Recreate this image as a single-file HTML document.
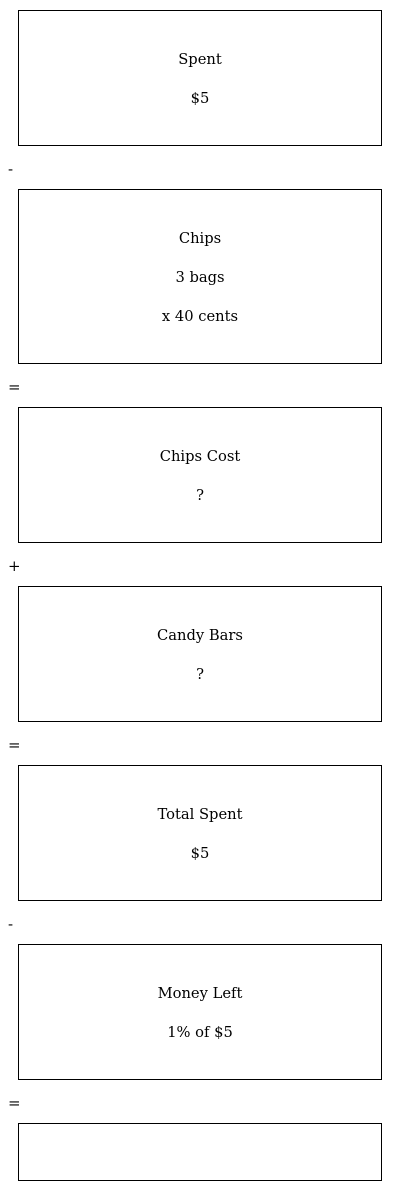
<!DOCTYPE html>
<html><head><style>
body{margin:0;padding:0 0 0 8px;width:392px;font-family:"DejaVu Serif",serif;font-size:14.7px;color:#000;background:#fff}
.box{box-sizing:border-box;margin:0 0 0 10px;width:364px;border:1px solid #000;padding:37px 0 0;text-align:center}
.box p{margin:0 0 16px;line-height:23px}
.op{height:43px;line-height:46px;font-size:15px}
</style></head><body>
<div style="height:10px"></div>
<div class="box" style="height:136px"><p>Spent</p><p>$5</p></div>
<div class="op">-</div>
<div class="box" style="height:175px"><p>Chips</p><p>3 bags</p><p>x 40 cents</p></div>
<div class="op">=</div>
<div class="box" style="height:136px"><p>Chips Cost</p><p>?</p></div>
<div class="op">+</div>
<div class="box" style="height:136px"><p>Candy Bars</p><p>?</p></div>
<div class="op">=</div>
<div class="box" style="height:136px"><p>Total Spent</p><p>$5</p></div>
<div class="op">-</div>
<div class="box" style="height:136px"><p>Money Left</p><p>1% of $5</p></div>
<div class="op">=</div>
<div class="box" style="height:58px;padding:0"></div>
</body></html>
